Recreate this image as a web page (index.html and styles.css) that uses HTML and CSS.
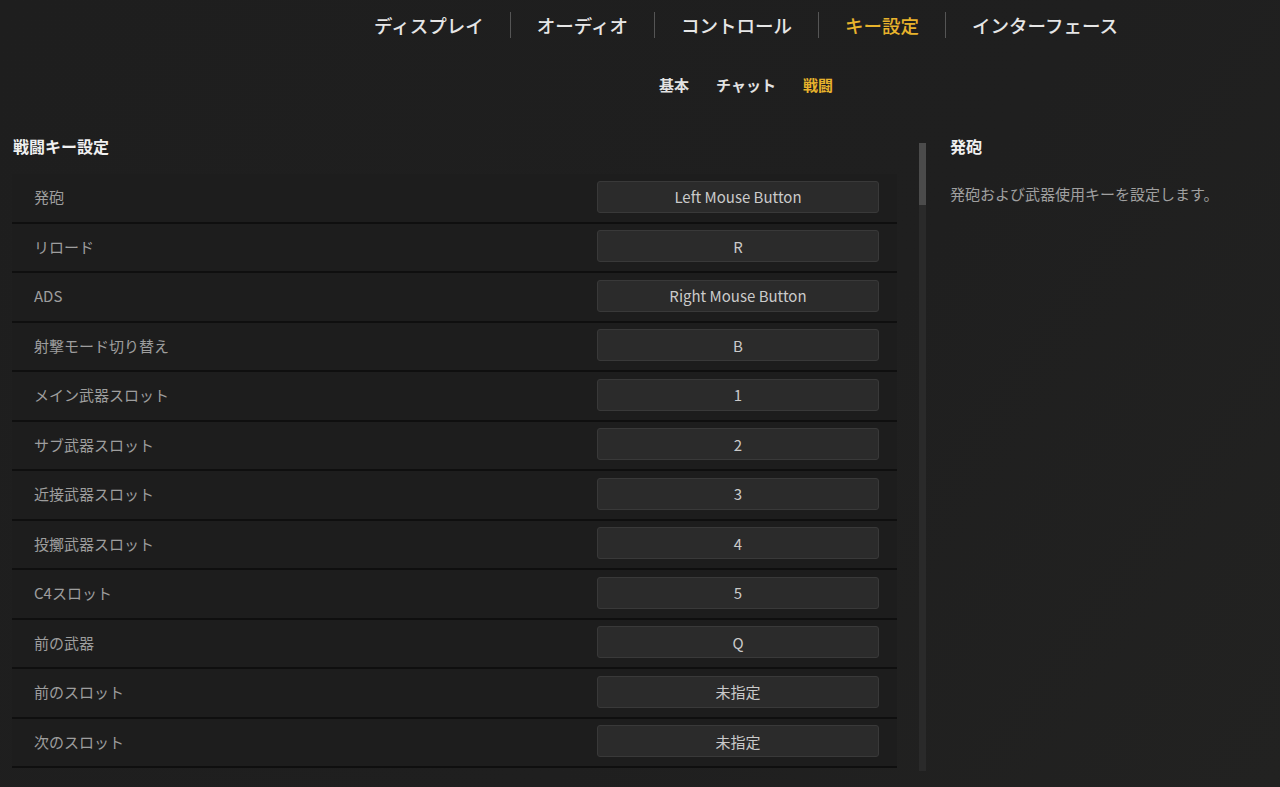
FILE: index.html
```html
<!DOCTYPE html>
<html lang="ja">
<head>
    <meta charset="UTF-8">
    <meta name="viewport" content="width=device-width, initial-scale=1.0">
    <title>キー設定</title>
    <link rel="stylesheet" href="styles.css">
</head>
<body>
    <header class="top-nav">
        <a class="tab">ディスプレイ</a>
        <span class="sep"></span>
        <a class="tab">オーディオ</a>
        <span class="sep"></span>
        <a class="tab">コントロール</a>
        <span class="sep"></span>
        <a class="tab active">キー設定</a>
        <span class="sep"></span>
        <a class="tab">インターフェース</a>
    </header>

    <nav class="sub-nav">
        <a class="sub-tab">基本</a>
        <a class="sub-tab">チャット</a>
        <a class="sub-tab active">戦闘</a>
    </nav>

    <main class="content">
        <section class="bindings">
            <h2 class="section-title">戦闘キー設定</h2>
            <div class="row"><span class="label">発砲</span><button class="key">Left Mouse Button</button></div>
            <div class="row"><span class="label">リロード</span><button class="key">R</button></div>
            <div class="row"><span class="label">ADS</span><button class="key">Right Mouse Button</button></div>
            <div class="row"><span class="label">射撃モード切り替え</span><button class="key">B</button></div>
            <div class="row"><span class="label">メイン武器スロット</span><button class="key">1</button></div>
            <div class="row"><span class="label">サブ武器スロット</span><button class="key">2</button></div>
            <div class="row"><span class="label">近接武器スロット</span><button class="key">3</button></div>
            <div class="row"><span class="label">投擲武器スロット</span><button class="key">4</button></div>
            <div class="row"><span class="label">C4スロット</span><button class="key">5</button></div>
            <div class="row"><span class="label">前の武器</span><button class="key">Q</button></div>
            <div class="row"><span class="label">前のスロット</span><button class="key">未指定</button></div>
            <div class="row"><span class="label">次のスロット</span><button class="key">未指定</button></div>
        </section>

        <div class="scrollbar"><div class="thumb"></div></div>

        <aside class="detail">
            <h3 class="detail-title">発砲</h3>
            <p class="detail-text">発砲および武器使用キーを設定します。</p>
        </aside>
    </main>
</body>
</html>
```

FILE: styles.css
```css
* {
    margin: 0;
    padding: 0;
    box-sizing: border-box;
}

body {
    font-family: 'Noto Sans CJK JP', 'Noto Sans', sans-serif;
    background: linear-gradient(125deg, #1e1e1e 0%, #1f1f1f 60%, #222221 100%);
    height: 787px;
    overflow: hidden;
    color: #e8e8e8;
}

.top-nav {
    display: flex;
    align-items: center;
    justify-content: center;
    padding-left: 212px;
    height: 50px;
}

.tab {
    font-size: 18.5px;
    font-weight: 500;
    color: #e6e6e6;
    padding: 0 26px;
}

.tab.active {
    color: #e8b32c;
}

.sep {
    width: 1px;
    height: 26px;
    background: #555;
}

.sub-nav {
    display: flex;
    justify-content: center;
    gap: 27px;
    padding-left: 212px;
    margin-top: 24px;
    height: 22px;
}

.sub-tab {
    font-size: 15px;
    font-weight: 700;
    line-height: 22px;
    color: #e2e2e2;
}

.sub-tab.active {
    color: #e8b32c;
}

.content {
    display: flex;
    margin-top: 37px;
}

.bindings {
    width: 897px;
    padding-left: 12px;
}

.section-title {
    font-size: 16px;
    font-weight: 700;
    color: #f0f0f0;
    margin-left: 1px;
    line-height: 22px;
    margin-top: 2px;
    margin-bottom: 17px;
}

.row {
    display: flex;
    align-items: center;
    justify-content: space-between;
    height: 49.5px;
    padding: 0 18px 2px 22px;
    background: #1d1d1d;
    border-bottom: 2px solid #0f0f0f;
}

.label {
    font-size: 15px;
    color: #9e9e9e;
}

.key {
    width: 282px;
    height: 32px;
    font-family: inherit;
    font-size: 15px;
    color: #cacaca;
    background: #2b2b2b;
    border: 1px solid #393939;
    border-radius: 3px;
}

.scrollbar {
    width: 7px;
    height: 628px;
    margin-left: 22px;
    margin-top: 10px;
    background: #2a2a2a;
}

.thumb {
    height: 62px;
    background: #4b4b4b;
}

.detail {
    margin-left: 24px;
    padding-top: 2px;
}

.detail-title {
    font-size: 16px;
    font-weight: 700;
    color: #f0f0f0;
    line-height: 22px;
}

.detail-text {
    margin-top: 26px;
    font-size: 15px;
    color: #a0a0a0;
}
```
